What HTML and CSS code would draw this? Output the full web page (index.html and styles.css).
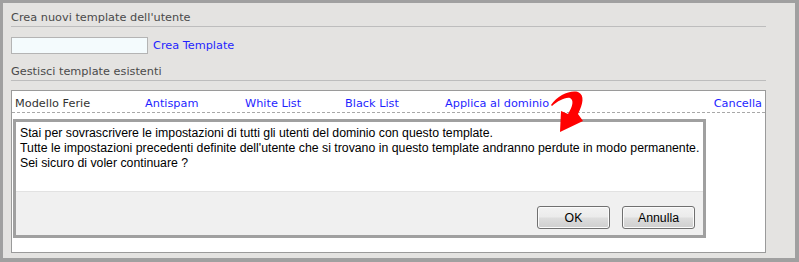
FILE: index.html
```html
<!DOCTYPE html>
<html>
<head>
<meta charset="utf-8">
<link rel="stylesheet" href="styles.css">
</head>
<body>
<div class="frame">
  <div class="heading first">Crea nuovi template dell'utente</div>
  <div class="create-row">
    <input class="name-input" type="text">
    <a class="link" href="#">Crea Template</a>
  </div>
  <div class="heading second">Gestisci template esistenti</div>
  <div class="box">
    <div class="tpl-row">
      <span class="tpl-name">Modello Ferie</span>
      <a class="link" href="#">Antispam</a>
      <a class="link" href="#">White List</a>
      <a class="link" href="#">Black List</a>
      <a class="link" href="#">Applica al dominio</a>
      <a class="link cancel" href="#">Cancella</a>
    </div>
    <div class="dialog">
      <div class="dialog-body">Stai per sovrascrivere le impostazioni di tutti gli utenti del dominio con questo template.<br>Tutte le impostazioni precedenti definite dell'utente che si trovano in questo template andranno perdute in modo permanente.<br>Sei sicuro di voler continuare ?</div>
      <div class="dialog-footer">
        <button class="btn">OK</button>
        <button class="btn">Annulla</button>
      </div>
    </div>
  </div>
  <svg class="arrow" viewBox="545 88 42 48" width="42" height="48">
    <path d="M551,105 C558,95 570,90 578,92 C585,95 583,104 578,114 L583,121 L560,132 L561,111 L568,114 C573,106 574,100 570,98 C565,97 558,101 552,106 Z" fill="#ff0000"/>
  </svg>
</div>
</body>
</html>
```
FILE: styles.css
```css
html, body {
  margin: 0;
  padding: 0;
}
body {
  width: 799px;
  height: 262px;
  overflow: hidden;
  font-family: "DejaVu Sans", Verdana, sans-serif;
  font-size: 11.3px;
}
.frame {
  position: relative;
  box-sizing: border-box;
  width: 799px;
  height: 262px;
  background: #e4e3e1;
  border-style: solid;
  border-color: #a0a0a0;
  border-width: 3px 4px 4px 3px;
  padding: 0 29px 0 8px;
}
.heading {
  line-height: 16px;
  color: #4a4a4a;
  border-bottom: 1px solid #bdbdbd;
}
.heading.first {
  margin-top: 7px;
}
.heading.second {
  margin-top: 10px;
}
.create-row {
  display: flex;
  align-items: center;
  gap: 5px;
  margin-top: 10px;
  height: 17px;
}
.name-input {
  box-sizing: border-box;
  width: 137px;
  height: 17px;
  margin: 0;
  padding: 0;
  border: 1px solid #b4b4b4;
  background: #f4fbfd;
}
.link {
  color: #1f1fff;
  text-decoration: none;
  white-space: nowrap;
}
.box {
  box-sizing: border-box;
  margin-top: 9px;
  height: 163px;
  background: #fff;
  border: 1px solid #9a9a9a;
}
.tpl-row {
  display: grid;
  grid-template-columns: 130px 100px 100px 100px 1fr auto;
  padding: 5px 3px 0 3px;
  line-height: 16px;
  border-bottom: 1px dashed #a8a8a8;
}
.tpl-name {
  color: #333;
}
.dialog {
  box-sizing: border-box;
  width: 693px;
  height: 119px;
  margin: 6px 0 0 1px;
  border: 3px solid #a0a0a0;
  display: flex;
  flex-direction: column;
}
.dialog-body {
  height: 69px;
  box-sizing: border-box;
  padding: 4px 0 0 4px;
  font-family: "Liberation Sans", Arial, sans-serif;
  font-size: 12.3px;
  line-height: 15px;
  color: #000;
  background: #fff;
  white-space: nowrap;
  overflow: hidden;
}
.dialog-footer {
  flex: 1;
  display: flex;
  justify-content: flex-end;
  align-items: flex-start;
  gap: 12px;
  padding: 14px 8px 0 0;
  background: #f0f0f0;
  border-top: 1px solid #e2e2e2;
}
.btn {
  box-sizing: border-box;
  width: 73px;
  height: 23px;
  margin: 0;
  padding: 0;
  border: 1px solid #707070;
  border-radius: 3px;
  background: linear-gradient(#f2f2f2 0%, #ebebeb 48%, #dddddd 52%, #cfcfcf 100%);
  box-shadow: inset 0 0 0 1px #fbfbfb;
  font-family: "Liberation Sans", Arial, sans-serif;
  font-size: 12.3px;
  color: #000;
}
.arrow {
  position: absolute;
  left: 542px;
  top: 85px;
}
```
